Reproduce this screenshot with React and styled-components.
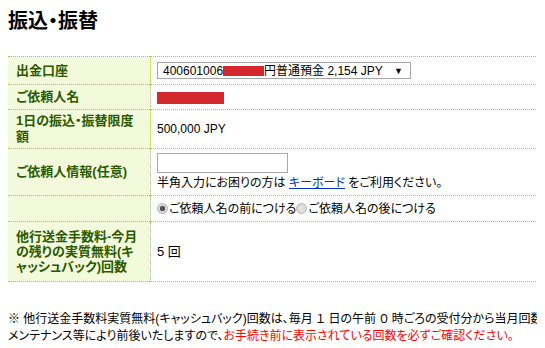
import styled, { createGlobalStyle } from "styled-components";

const GlobalStyle = createGlobalStyle`
  body {
    margin: 8px;
    overflow: hidden;
    font-family: "Liberation Sans", "Noto Sans CJK JP", sans-serif;
    font-feature-settings: "palt";
    color: #000;
    background: #fff;
  }
`;

export default function App() {
  return (
    <>
      <GlobalStyle />
      <Page>
        <Title>振込・振替</Title>
        <Table>
          <tbody>
            <Row $h={28}>
              <Label>出金口座</Label>
              <Value>
                <SelectBox>
                  <span>400601006</span>
                  <Redact $w={41} $h={10} />
                  <span>円普通預金 2,154 JPY</span>
                  <Arrow>▼</Arrow>
                </SelectBox>
              </Value>
            </Row>
            <Row $h={25}>
              <Label>ご依頼人名</Label>
              <Value>
                <Redact $w={67} $h={12} />
              </Value>
            </Row>
            <Row $h={39}>
              <Label>1日の振込・振替限度額</Label>
              <Value>500,000 JPY</Value>
            </Row>
            <Row $h={47}>
              <Label>ご依頼人情報(任意)</Label>
              <Value>
                <TextInput type="text" />
                <Hint>
                  半角入力にお困りの方は <Link href="#">キーボード</Link> をご利用ください。
                </Hint>
              </Value>
            </Row>
            <Row $h={26}>
              <Label />
              <Value>
                <RadioGroup>
                  <Radio type="radio" name="pos" defaultChecked />
                  <span>ご依頼人名の前につける</span>
                  <Radio type="radio" name="pos" />
                  <span>ご依頼人名の後につける</span>
                </RadioGroup>
              </Value>
            </Row>
            <Row $h={60}>
              <Label $tight>
                他行送金手数料-今月
                <br />
                の残りの実質無料(キ
                <br />
                ャッシュバック)回数
              </Label>
              <Value>
                <Count>5 回</Count>
              </Value>
            </Row>
          </tbody>
        </Table>
        <Note>
          ※ 他行送金手数料実質無料(キャッシュバック)回数は、毎月 １ 日の午前 ０ 時ごろの受付分から当月回数
          <br />
          メンテナンス等により前後いたしますので、<Warn>お手続き前に表示されている回数を必ずご確認ください。</Warn>
        </Note>
      </Page>
    </>
  );
}

const Page = styled.div`
  width: 600px;
`;

const Title = styled.h1`
  margin: 0 0 22px;
  font-size: 20px;
  line-height: 26px;
  font-weight: bold;
`;

const Table = styled.table`
  width: 580px;
  border-collapse: collapse;
  border-top: 1px dotted #a4cc3a;
`;

const Row = styled.tr`
  height: ${(p) => p.$h}px;
  border-bottom: 1px dotted #a4cc3a;
`;

const Label = styled.th`
  width: 126px;
  padding: 0 8px;
  background: #f2fadb;
  border-right: 1px dotted #a4cc3a;
  color: #2b5a00;
  font-size: 13px;
  font-weight: bold;
  line-height: ${(p) => (p.$tight ? "15px" : "16px")};
  text-align: left;
  vertical-align: middle;
  white-space: ${(p) => (p.$tight ? "nowrap" : "normal")};
`;

const Value = styled.td`
  padding: 0 6px;
  font-size: 12px;
  line-height: 16px;
  vertical-align: middle;
`;

const SelectBox = styled.div`
  display: inline-flex;
  align-items: center;
  box-sizing: border-box;
  width: 254px;
  height: 17px;
  padding: 0 5px;
  border: 1px solid #a6a6a6;
  font-size: 12px;
  white-space: nowrap;
`;

const Arrow = styled.span`
  margin-left: auto;
  margin-right: 2px;
  font-size: 9px;
`;

const Redact = styled.span`
  display: inline-block;
  width: ${(p) => p.$w}px;
  height: ${(p) => p.$h}px;
  background: #d2282e;
  vertical-align: middle;
`;

const TextInput = styled.input`
  display: block;
  box-sizing: border-box;
  width: 131px;
  height: 20px;
  margin: 0;
  border: 1px solid #a9a9a9;
`;

const Hint = styled.div`
  margin-top: 2px;
`;

const Link = styled.a`
  color: #0033cc;
  text-decoration: underline;
`;

const RadioGroup = styled.label`
  display: flex;
  align-items: center;
  white-space: nowrap;
`;

const Radio = styled.input`
  appearance: none;
  width: 11px;
  height: 11px;
  margin: 0 1px 0 0;
  border-radius: 50%;
  border: 1px solid #b8b8b8;
  background: radial-gradient(circle, #e8e8e8 0%, #cfcfcf 100%);
  &:checked {
    background: radial-gradient(circle, #555 0 2.5px, #d8d8d8 3px);
  }
`;

const Count = styled.span`
  font-size: 13px;
`;

const Note = styled.p`
  margin: 29px 0 0;
  font-size: 12px;
  line-height: 17px;
  white-space: nowrap;
`;

const Warn = styled.span`
  color: #ff0000;
`;
